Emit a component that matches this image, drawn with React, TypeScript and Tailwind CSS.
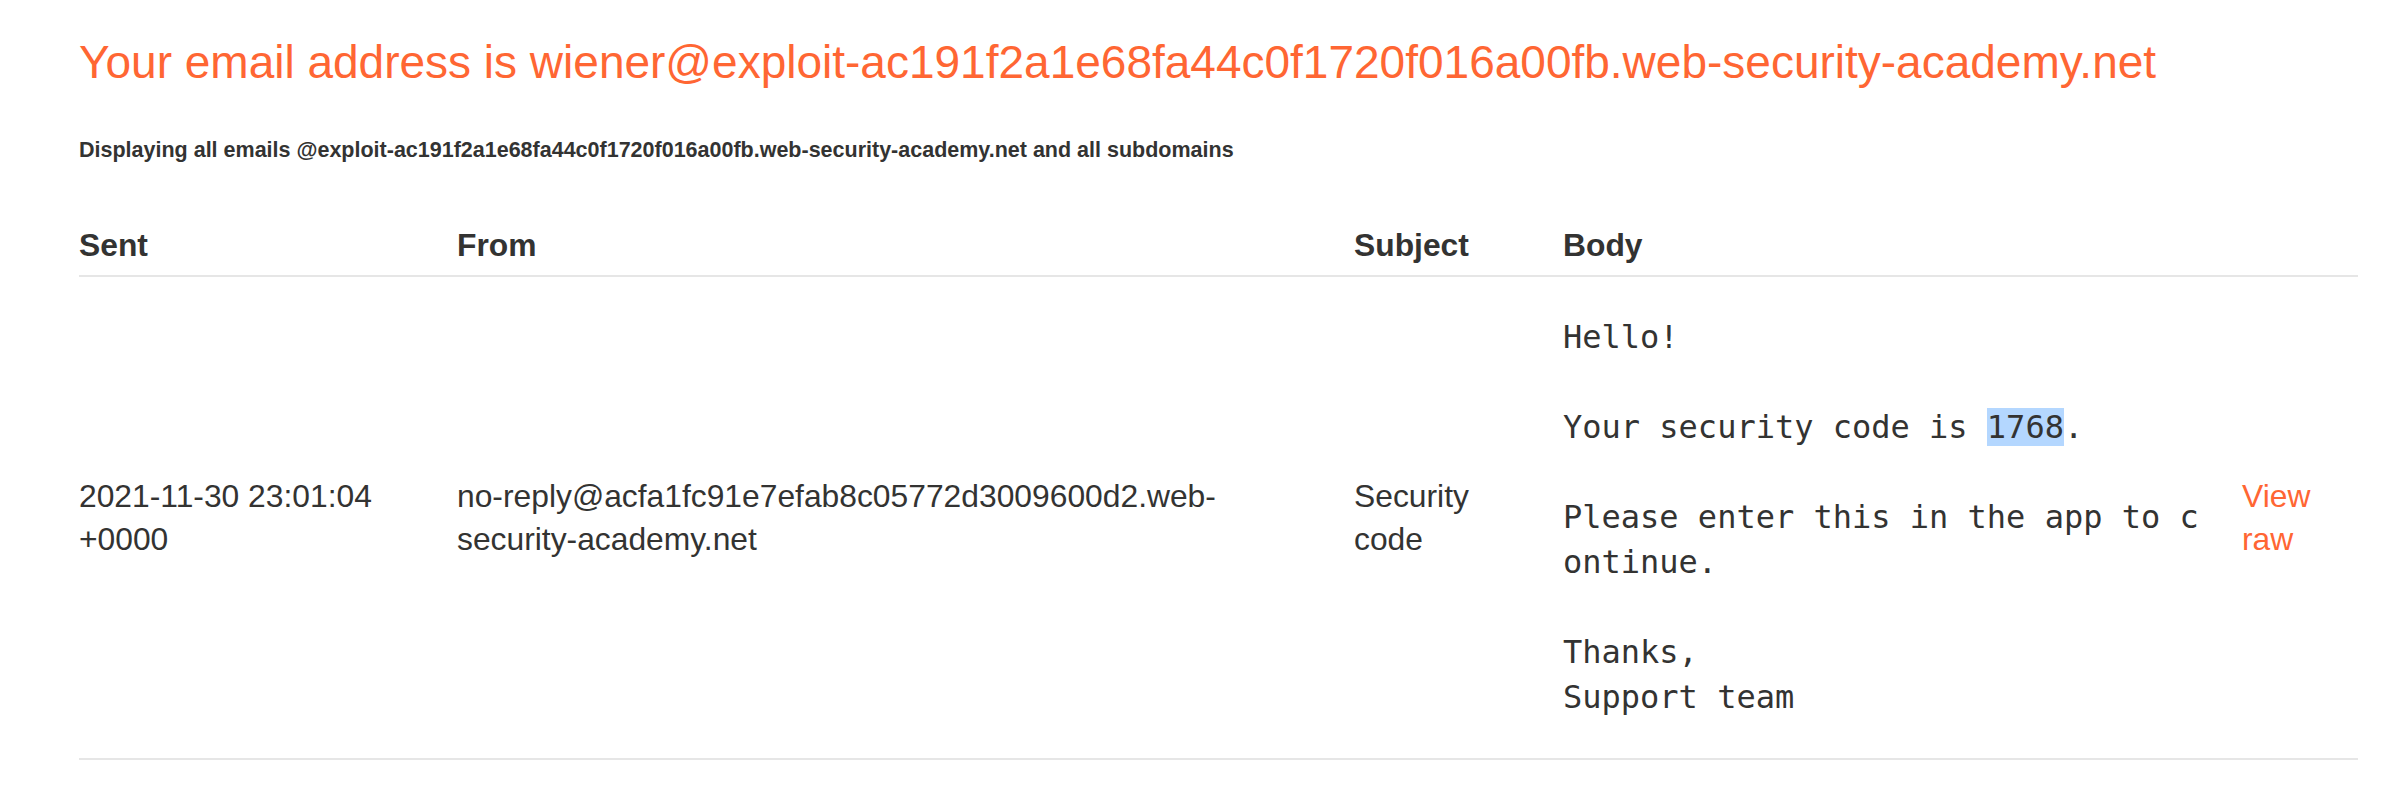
import React from "react";

const sans = { fontFamily: '"Liberation Sans", Arial, Helvetica, sans-serif' };

export default function App() {
  return (
    <div
      className="min-h-screen bg-white text-[#333332] pl-[79px] pr-[24px]"
      style={sans}
    >
      <h1 className="pt-[34px] text-[46px] leading-[56px] font-normal text-[#ff6633]">
        Your email address is wiener@exploit-ac191f2a1e68fa44c0f1720f016a00fb.web-security-academy.net
      </h1>
      <h4 className="mt-[48px] text-[21.5px] leading-[24px] font-bold">
        Displaying all emails @exploit-ac191f2a1e68fa44c0f1720f016a00fb.web-security-academy.net and all subdomains
      </h4>

      <div className="mt-[62px] w-[2279px]">
        <div className="grid grid-cols-[378px_897px_209px_679px_116px] border-b-2 border-[#e6e6e6] pb-[8px] text-[31.8px] leading-[43px] font-bold">
          <div>Sent</div>
          <div>From</div>
          <div>Subject</div>
          <div>Body</div>
          <div></div>
        </div>
        <div className="grid grid-cols-[378px_897px_209px_679px_116px] items-center border-b-2 border-[#e6e6e6] py-[38px] text-[31.8px] leading-[43px]">
          <div className="pr-[30px]">2021-11-30 23:01:04 +0000</div>
          <div className="pr-[30px]">
            no-reply@acfa1fc91e7efab8c05772d3009600d2.web-security-academy.net
          </div>
          <div className="pr-[30px]">Security code</div>
          <div className="pr-[32px]">
            <pre
              className="m-0 whitespace-pre-wrap break-all text-[32px] leading-[45px]"
              style={{ fontFamily: '"DejaVu Sans Mono", "Liberation Mono", monospace' }}
            >
              {"Hello!\n\nYour security code is "}
              <span className="bg-[#b4d7ff]">1768</span>
              {".\n\nPlease enter this in the app to continue.\n\nThanks,\nSupport team"}
            </pre>
          </div>
          <div>
            <a className="text-[#ff6633] no-underline" href="#">
              View raw
            </a>
          </div>
        </div>
      </div>
    </div>
  );
}
